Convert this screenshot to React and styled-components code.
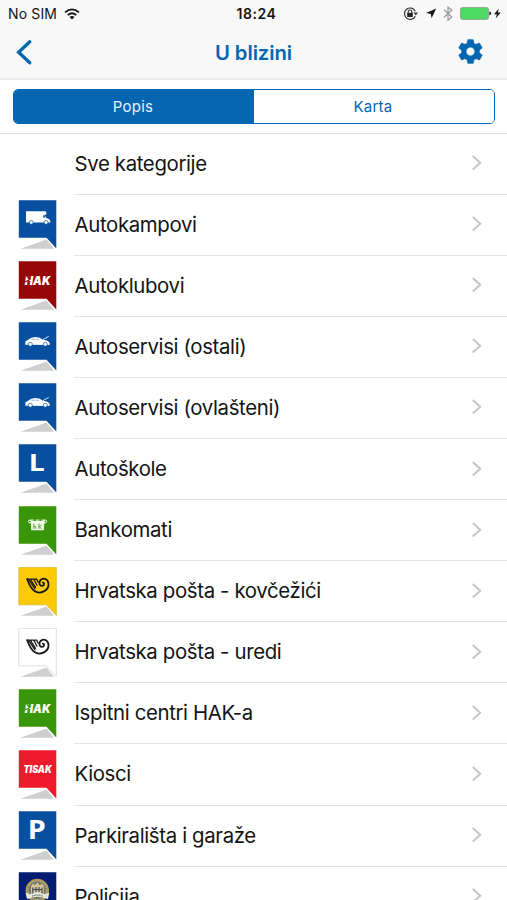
import React from "react";
import styled, { createGlobalStyle } from "styled-components";

const theme = {
  primary: "#0465b1",
  bar: "#f8f8f8",
  line: "#e4e4e6",
  text: "#141414",
  chevron: "#c5c5ca",
};

const GlobalStyle = createGlobalStyle`
  * {
    box-sizing: border-box;
  }
  body {
    margin: 0;
    background: #fff;
    overflow: hidden;
    font-family: Inter, "Liberation Sans", sans-serif;
    color: ${theme.text};
  }
  svg {
    display: block;
    flex: none;
  }
`;

const Screen = styled.div`
  width: 507px;
  height: 900px;
  overflow: hidden;
`;

const StatusBar = styled.div`
  display: grid;
  grid-template-columns: 1fr auto 1fr;
  align-items: center;
  height: 27px;
  padding: 0 5px 0 8px;
  background: ${theme.bar};
`;

const Carrier = styled.div`
  display: flex;
  align-items: center;
  gap: 7px;
  font-size: 14px;
  letter-spacing: 0.15px;
`;

const Clock = styled.div`
  font-size: 14px;
  font-weight: 600;
  letter-spacing: 0.55px;
  padding-left: 3px;
`;

const StatusIcons = styled.div`
  display: flex;
  justify-content: flex-end;
`;

const NavBar = styled.header`
  display: grid;
  grid-template-columns: 1fr auto 1fr;
  align-items: center;
  height: 53px;
  padding: 0 22px 2px 15px;
  background: ${theme.bar};
  border-bottom: 2px solid #eaeaeb;
`;

const Title = styled.h1`
  margin: 0;
  padding: 2px 0 0 7px;
  color: ${theme.primary};
  font-size: 20.3px;
  font-weight: 600;
  letter-spacing: -0.1px;
`;

const NavButton = styled.button`
  justify-self: ${props => (props.$end ? "end" : "start")};
  padding: 0;
  border: 0;
  background: none;
  color: ${theme.primary};
`;

const Switcher = styled.div`
  height: 53.5px;
  padding: 9px 12px 9px 13px;
  border-bottom: 1px solid ${theme.line};
`;

const Segments = styled.div`
  display: flex;
  height: 35px;
  border: 1px solid ${theme.primary};
  border-radius: 5px;
  overflow: hidden;
`;

const Segment = styled.button`
  flex: 1;
  padding: 0 2px 1px 0;
  border: 0;
  background: ${props => (props.$active ? theme.primary : "#fff")};
  color: ${props => (props.$active ? "#e6f1fa" : theme.primary)};
  font: 400 15px Inter, sans-serif;
  letter-spacing: 0.25px;
`;

const List = styled.ul`
  margin: 0;
  padding: 0;
  list-style: none;
`;

const Row = styled.li`
  display: flex;
  height: 61.1px;
  padding-left: 18px;
`;

const IconSlot = styled.div`
  width: 56px;
  padding-top: 5.5px;
`;

const RowBody = styled.div`
  flex: 1;
  display: flex;
  align-items: center;
  justify-content: space-between;
  padding: 0 24px 1px 0.5px;
  border-bottom: 1px solid ${theme.line};
`;

const Label = styled.span`
  font-size: 20.4px;
  letter-spacing: -0.36px;
  white-space: nowrap;
`;

const Pin = ({ color, outline, children }) => (
  <svg width="40" height="50" viewBox="0 0 40 50">
    <path d="M2.5 48.7L28.5 39.6L36 48.7Z" fill="#cfcfcf" />
    <path
      d="M0.8 0.2H38.3V48.5L28.5 37.8H0.8Z"
      fill={color}
      stroke={outline || "none"}
      strokeWidth="0.8"
    />
    {children}
  </svg>
);

const PinText = ({ x, y, size, width, italic, children }) => (
  <text
    x={x}
    y={y}
    fill="#fff"
    fontFamily={italic ? "Inter, sans-serif" : '"Open Sans", sans-serif'}
    fontSize={size}
    fontWeight={italic ? 900 : 700}
    fontStyle={italic ? "italic" : "normal"}
    textLength={width}
    lengthAdjust="spacingAndGlyphs"
  >
    {children}
  </text>
);

const Camper = () => (
  <g>
    <path d="M8 11.3H27.6Q28.7 12 28.2 14.8H26L28.5 18L31.7 19.6L32.5 22.6H8Z" fill="#fff" />
    <path d="M25.1 15.2H25.9L27.6 17.6H25.1Z" fill="#084f9f" />
    <circle cx="13.3" cy="22.4" r="1.9" fill="#fff" stroke="#084f9f" strokeWidth="0.7" />
    <circle cx="28" cy="22.4" r="1.9" fill="#fff" stroke="#084f9f" strokeWidth="0.7" />
  </g>
);

const Car = () => (
  <g>
    <path
      d="M7.3 22.8V19.6L9.7 18Q13.2 14.8 17.5 14.9Q22 15 25 17.8Q31 18.5 31.8 21.2L31.5 22.9Z"
      fill="#fff"
    />
    <path d="M12.2 17.9L14.8 16.4L16.6 16.2V17.9ZM17.5 16.2Q20.4 16.2 22 17.9H17.5Z" fill="#b5cbe4" />
    <path d="M25 17.6L30.8 14.3" stroke="#fff" strokeWidth="0.8" />
    <circle cx="12.3" cy="22.3" r="2" fill="#fff" stroke="#084f9f" strokeWidth="0.7" />
    <circle cx="27.3" cy="22.3" r="2" fill="#fff" stroke="#084f9f" strokeWidth="0.7" />
  </g>
);

const Hak = ({ color }) => (
  <g>
    <PinText x="6.8" y="23.5" size={11.2} width={25.5} italic>HAK</PinText>
    <path d="M8.4 14.6L11.8 18.6L6.8 21" fill="none" stroke={color} strokeWidth="1.2" />
  </g>
);

const Cash = () => (
  <g fill="none" stroke="#fff">
    <path d="M12.8 15H26.5L25.8 24.3H13.2Z" fill="#f0faea" stroke="none" />
    <circle cx="11.9" cy="15.5" r="1.4" strokeWidth="1" />
    <circle cx="27.2" cy="15.5" r="1.4" strokeWidth="1" />
    <path d="M12 14.1H15.8M17.8 14.1H21.4M23.2 14.1H27" strokeWidth="1" />
    <path d="M15.8 17.5V22.8M16 20.8Q18 19 18 22.8M21 17.5V22.8M23.7 19L21.3 20.8L23.7 22.8" stroke="#3a9609" strokeWidth="0.8" />
  </g>
);

const PostHorn = () => (
  <g fill="none" stroke="#171717" strokeLinecap="round">
    <path
      d="M9.2 12.2Q12.3 20.8 16.5 24.1C22.4 28 30.8 23.4 30.5 17C30.3 12.2 26.2 10.6 23.2 12.5C20.2 14.6 21.2 19.2 24.5 18.8C26.6 18.4 26.6 15.6 24.8 15.6"
      strokeWidth="1.8"
    />
    <path d="M9.2 12.2H12.3L17.5 20.3M13.2 12.2H15.8L19 18.2M16.8 12.2H18.7L20.2 15.2M11 13L17 22" strokeWidth="1.3" />
  </g>
);

const Badge = () => (
  <g>
    <circle cx="19.3" cy="18.4" r="10.8" fill="#777967" stroke="#b59a52" strokeWidth="1.8" />
    <circle cx="19.3" cy="18.4" r="9.2" fill="none" stroke="#e5dcae" strokeWidth="1" strokeDasharray="1 1" />
    <path d="M13 14.5L15 11.5L17 13.5L19.3 10.5L21.8 13.5L24 11.5L25.8 14.5V23H13Z" fill="#d5c79a" />
    <path d="M14.8 15.5V22M18 15V20M21 15V20M24 15.5V22M15.5 17.5H23.5" stroke="#394155" strokeWidth="1.1" />
    <path d="M7.5 20.8L13 22.2Q19.3 18.5 25.8 22.2L31.3 20.8L30 27L25 25.8Q19 23.5 14 25.8L9 27Z" fill="#e7e4da" />
    <path d="M14 24.3Q19.3 21.8 25 24.3" fill="none" stroke="#4c5166" strokeWidth="1" strokeDasharray="1.2 0.6" />
  </g>
);

const categories = [
  { name: "Sve kategorije" },
  { name: "Autokampovi", color: "#084f9f", glyph: <Camper /> },
  { name: "Autoklubovi", color: "#960709", glyph: <Hak color="#960709" /> },
  { name: "Autoservisi (ostali)", color: "#084f9f", glyph: <Car /> },
  { name: "Autoservisi (ovlašteni)", color: "#084f9f", glyph: <Car /> },
  { name: "Autoškole", color: "#084f9f", glyph: <PinText x="10.8" y="27.3" size={23.5} width={16}>L</PinText> },
  { name: "Bankomati", color: "#3a9609", glyph: <Cash /> },
  { name: "Hrvatska pošta - kovčežići", color: "#fccb05", outline: "#d8b83a", glyph: <PostHorn /> },
  { name: "Hrvatska pošta - uredi", color: "#fff", outline: "#d5d5d5", glyph: <PostHorn /> },
  { name: "Ispitni centri HAK-a", color: "#3a9609", glyph: <Hak color="#3a9609" /> },
  { name: "Kiosci", color: "#ed1b2c", glyph: <PinText x="5.4" y="23.1" size={9.8} width={28.4} italic>TISAK</PinText> },
  { name: "Parkirališta i garaže", color: "#084f9f", glyph: <PinText x="9.8" y="28.2" size={26.5} width={18}>P</PinText> },
  { name: "Policija", color: "#051d70", glyph: <Badge /> },
];

const Wifi = () => (
  <svg width="16" height="12" viewBox="0 0 16 12" fill="none" stroke="#181818" strokeWidth="1.8">
    <path d="M1 4.4Q8 -1.7 15 4.4M3.7 7.1Q8 3.3 12.3 7.1" />
    <path d="M5.5 9Q8 7 10.5 9L8 11.5Z" fill="#181818" stroke="none" />
  </svg>
);

const DeviceStatus = () => (
  <svg width="100" height="20" viewBox="402 4 100 20">
    <g fill="none" stroke="#333">
      <path d="M415.3 11.2A5.7 5.7 0 1 0 415.3 16.2" strokeWidth="1.2" />
      <path d="M413.5 12.5H418L415.8 15.4Z" fill="#333" stroke="none" />
      <path d="M408.2 13.2V11.7Q408.2 10 410 10Q411.8 10 411.8 11.7V13.2" strokeWidth="1.1" />
      <rect x="407.2" y="12.8" width="5.6" height="4.2" fill="#222" stroke="none" />
    </g>
    <path d="M436.2 8.6L426 13.1L430.8 13.9L431.6 18.2Z" fill="#181818" />
    <path d="M444 9.8L451.8 17L448 20.2V7L451.8 10.2L444 17.2" fill="none" stroke="#999" strokeWidth="1.2" />
    <rect x="460.5" y="7.6" width="28" height="11.8" rx="1.8" fill="#4cd964" stroke="#8b9c8d" strokeWidth="0.8" />
    <path d="M489.3 11.6Q491.2 11.8 491.2 13.5Q491.2 15.2 489.3 15.4Z" fill="#222" />
    <path d="M498.8 8.4L494 14.2H496.9L495.6 18.6L500.8 12.4H497.8Z" fill="#181818" />
  </svg>
);

const Back = () => (
  <svg width="20" height="28" viewBox="0 0 20 28">
    <path d="M14.8 3.8L3.6 14.2L14.8 24.8" fill="none" stroke="currentColor" strokeWidth="3.3" strokeLinecap="round" />
  </svg>
);

const Gear = () => (
  <svg width="29" height="29" viewBox="0 0 24 24">
    <path
      fill="currentColor"
      stroke="currentColor"
      strokeWidth="0.3"
      d="M19.43 12.98c.04-.32.07-.64.07-.98s-.03-.66-.07-.98l2.11-1.65c.19-.15.24-.42.12-.64l-2-3.46c-.12-.22-.39-.3-.61-.22l-2.49 1c-.52-.4-1.08-.73-1.69-.98l-.38-2.65C14.46 2.18 14.25 2 14 2h-4c-.25 0-.46.18-.49.42l-.38 2.65c-.61.25-1.17.59-1.69.98l-2.49-1c-.23-.09-.49 0-.61.22l-2 3.46c-.13.22-.07.49.12.64l2.11 1.65c-.04.32-.07.65-.07.98s.03.66.07.98l-2.11 1.65c-.19.15-.24.42-.12.64l2 3.46c.12.22.39.3.61.22l2.49-1c.52.4 1.08.73 1.69.98l.38 2.65c.03.24.24.42.49.42h4c.25 0 .46-.18.49-.42l.38-2.65c.61-.25 1.17-.59 1.69-.98l2.49 1c.23.09.49 0 .61-.22l2-3.46c.12-.22.07-.49-.12-.64l-2.11-1.65zM12 15.5c-1.93 0-3.5-1.57-3.5-3.5s1.57-3.5 3.5-3.5 3.5 1.57 3.5 3.5-1.57 3.5-3.5 3.5z"
    />
  </svg>
);

const Chevron = () => (
  <svg width="12" height="18" viewBox="0 0 12 18">
    <path d="M1.8 2L9.2 8.7L1.8 15.4" fill="none" stroke={theme.chevron} strokeWidth="2" />
  </svg>
);

export default function App() {
  return (
    <Screen>
      <GlobalStyle />
      <StatusBar>
        <Carrier>
          No SIM
          <Wifi />
        </Carrier>
        <Clock>18:24</Clock>
        <StatusIcons>
          <DeviceStatus />
        </StatusIcons>
      </StatusBar>
      <NavBar>
        <NavButton><Back /></NavButton>
        <Title>U blizini</Title>
        <NavButton $end><Gear /></NavButton>
      </NavBar>
      <Switcher>
        <Segments>
          <Segment $active>Popis</Segment>
          <Segment>Karta</Segment>
        </Segments>
      </Switcher>
      <List>
        {categories.map(({ name, color, outline, glyph }) => (
          <Row key={name}>
            <IconSlot>
              {glyph && <Pin color={color} outline={outline}>{glyph}</Pin>}
            </IconSlot>
            <RowBody>
              <Label>{name}</Label>
              <Chevron />
            </RowBody>
          </Row>
        ))}
      </List>
    </Screen>
  );
}
